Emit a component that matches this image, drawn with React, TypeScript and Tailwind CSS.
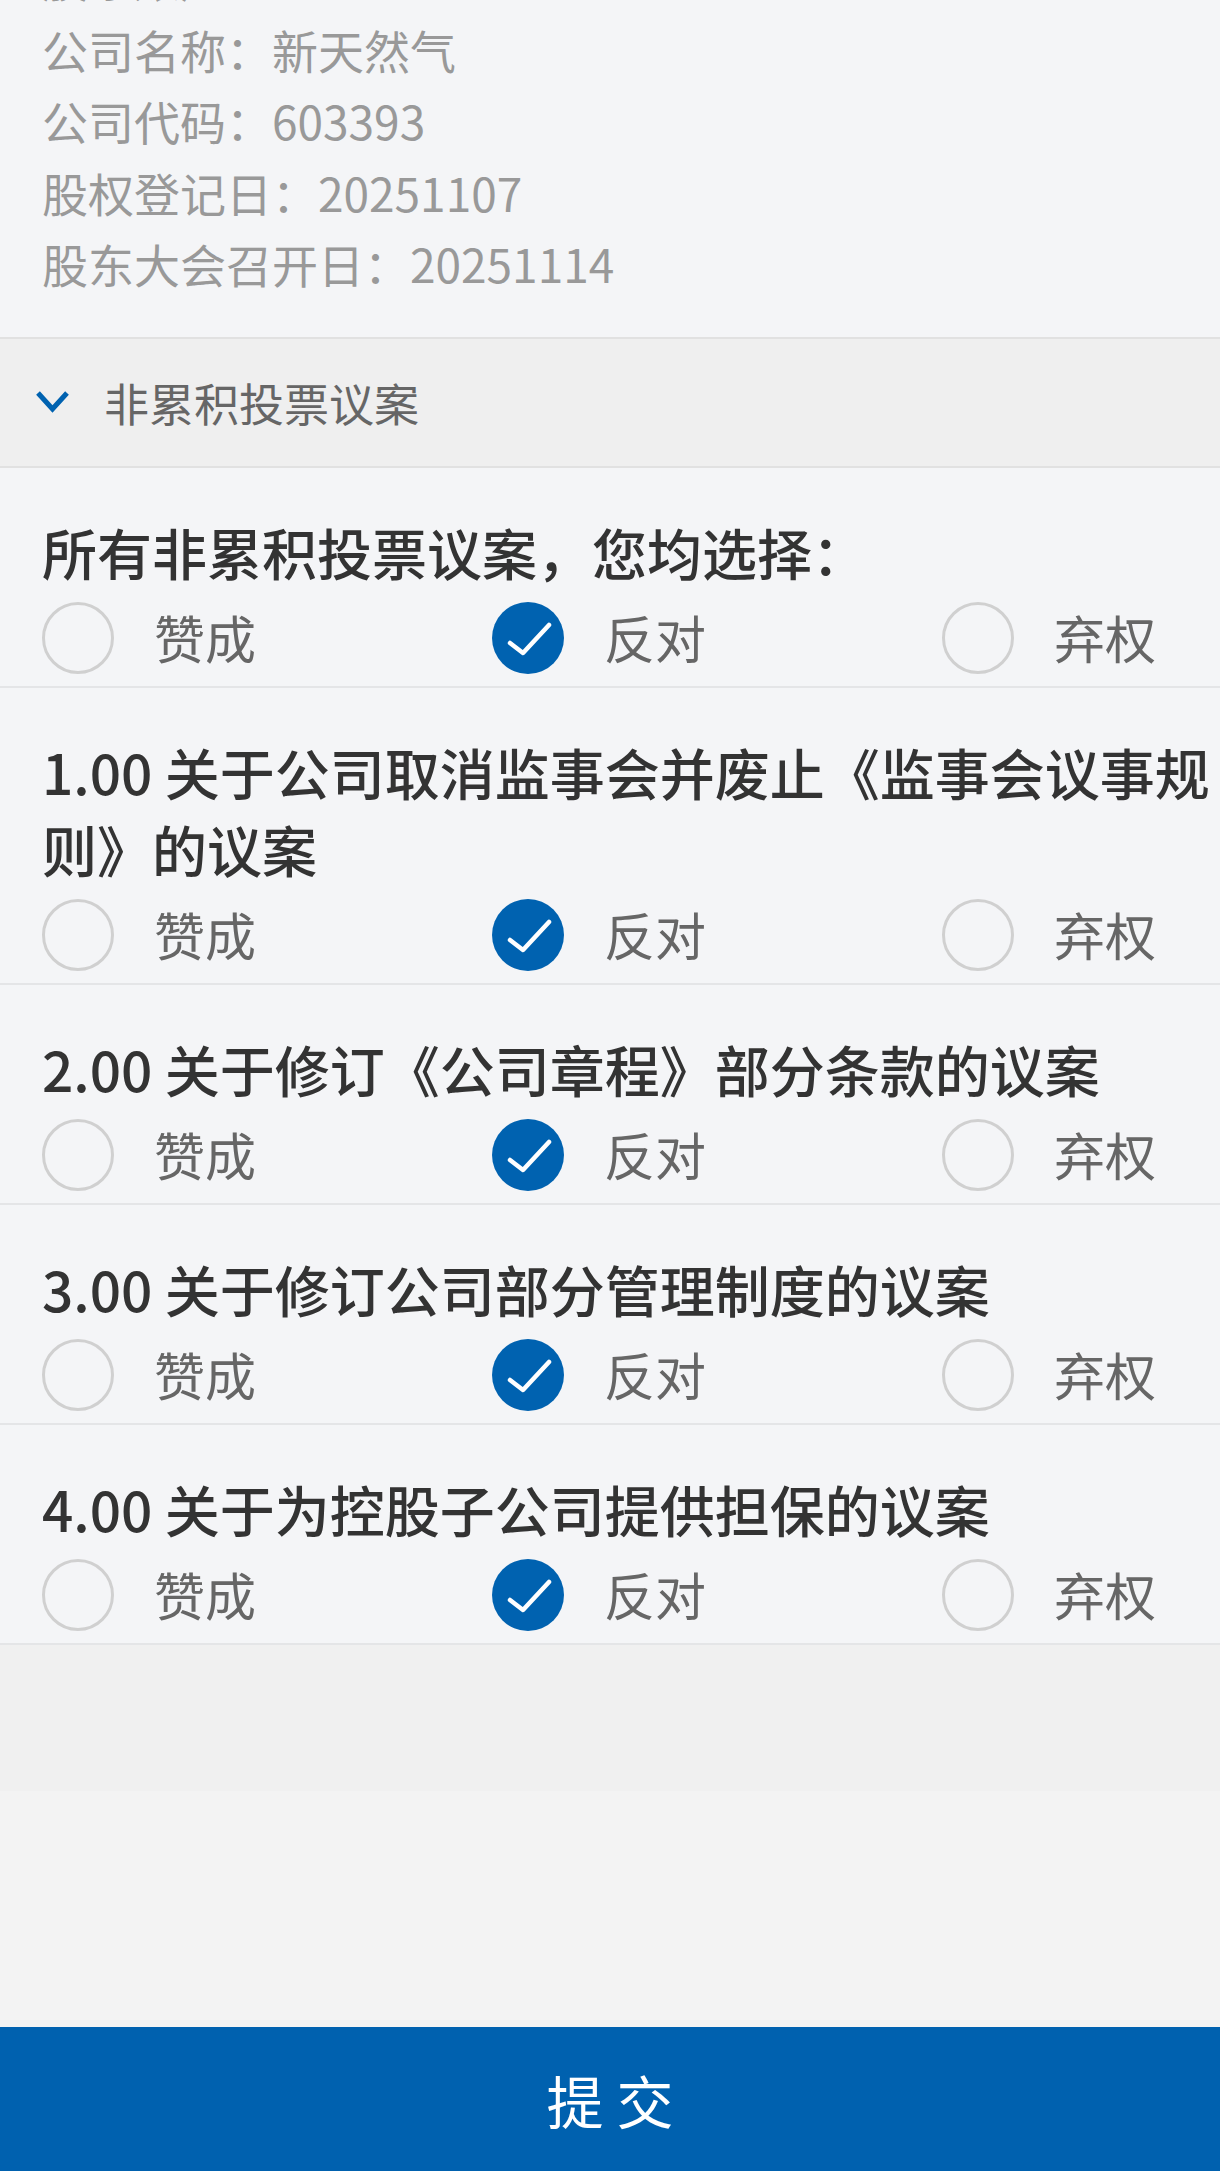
import React from "react";

const infoLines = [
  "股东账户：",
  "公司名称：新天然气",
  "公司代码：603393",
  "股权登记日：20251107",
  "股东大会召开日：20251114",
];

const proposals = [
  { id: "all", title: "所有非累积投票议案，您均选择：" },
  { id: "1", title: "1.00 关于公司取消监事会并废止《监事会议事规则》的议案" },
  { id: "2", title: "2.00 关于修订《公司章程》部分条款的议案" },
  { id: "3", title: "3.00 关于修订公司部分管理制度的议案" },
  { id: "4", title: "4.00 关于为控股子公司提供担保的议案" },
];

const choices = ["赞成", "反对", "弃权"];

function Radio({ checked }: { checked: boolean }) {
  if (checked) {
    return (
      <span className="flex h-[72px] w-[72px] shrink-0 items-center justify-center rounded-full bg-[#0062b0]">
        <svg width="72" height="72" viewBox="0 0 72 72" fill="none">
          <path
            d="M18 41 L31 51 L57 23"
            stroke="#ffffff"
            strokeWidth="4.5"
            strokeLinecap="round"
            strokeLinejoin="round"
          />
        </svg>
      </span>
    );
  }
  return <span className="h-[72px] w-[72px] shrink-0 rounded-full border-[3px] border-[#d0d0d0]" />;
}

function ProposalRow({ title }: { title: string }) {
  return (
    <div className="border-b-2 border-[#e4e5e7] pb-[12px] pl-[42px] pt-[45px]">
      <p className="text-[55px] font-medium leading-[77px] text-[#333333]">{title}</p>
      <div className="mt-[12px] grid grid-cols-[450px_450px_1fr]">
        {choices.map((c) => (
          <div key={c} className="flex h-[72px] items-center gap-[40px]">
            <Radio checked={c === "反对"} />
            <span className="text-[51px] leading-none text-[#666666]">{c}</span>
          </div>
        ))}
      </div>
    </div>
  );
}

export default function App() {
  return (
    <div
      className="flex h-[2171px] w-[1220px] flex-col overflow-hidden bg-[#f4f5f7]"
      style={{ fontFamily: '"Noto Sans CJK SC", "Noto Sans", sans-serif' }}
    >
      {/* meeting info */}
      <div className="-mt-[58px] pb-[37px] pl-[42px]">
        {infoLines.map((line) => (
          <p key={line} className="text-[46px] leading-[71.5px] text-[#999999]">
            {line}
          </p>
        ))}
      </div>

      {/* section header */}
      <div className="flex h-[131px] items-center gap-[34px] border-y-2 border-[#e1e1e1] bg-[#efefef] pl-[35px]">
        <svg width="35" height="26" viewBox="0 0 35 26" fill="none">
          <path d="M3 4 L17.5 20 L32 4" stroke="#0062b0" strokeWidth="5" strokeLinejoin="miter" />
        </svg>
        <span className="text-[45px] leading-none text-[#666666]">非累积投票议案</span>
      </div>

      {proposals.map((p) => (
        <ProposalRow key={p.id} title={p.title} />
      ))}

      <div className="h-[146px] bg-[#f0f0f0]" />
      <div className="flex-1 bg-[#f3f3f3]" />

      <button className="h-[144px] w-full shrink-0 bg-[#0061af] text-[57px] leading-none text-white">
        提 交
      </button>
    </div>
  );
}
